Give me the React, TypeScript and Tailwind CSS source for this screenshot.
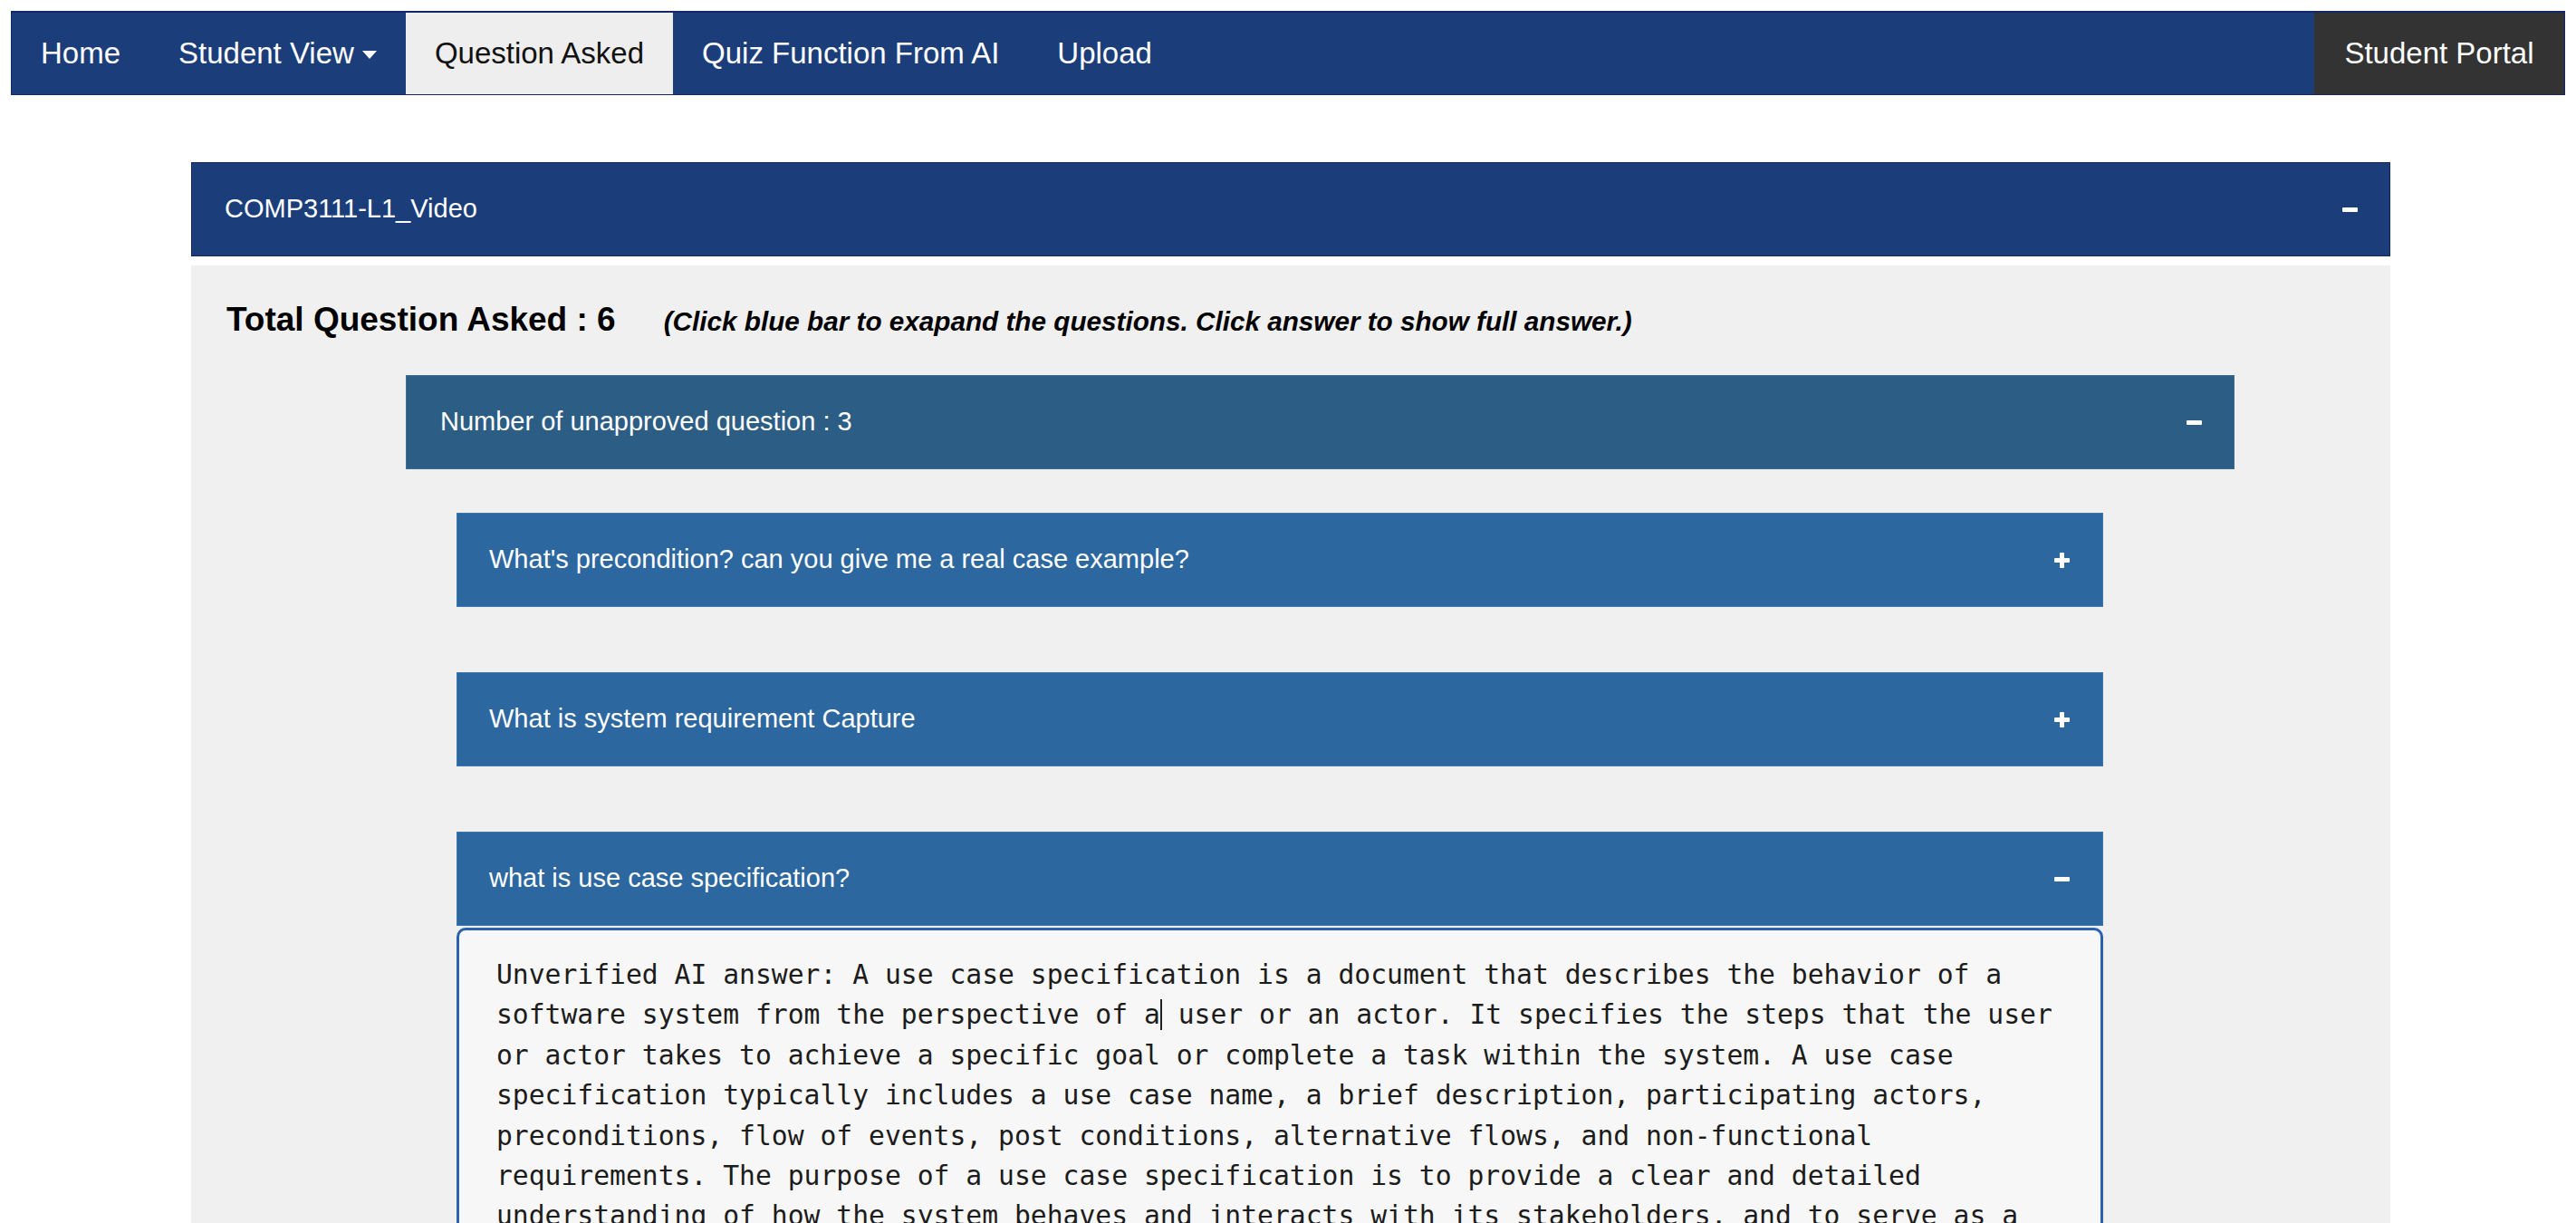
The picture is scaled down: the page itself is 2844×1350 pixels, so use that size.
import React from "react"

const navItems = ["Home", "Student View", "Question Asked", "Quiz Function From AI", "Upload"]

const questions = [
  { text: "What's precondition? can you give me a real case example?", open: false },
  { text: "What is system requirement Capture", open: false },
  { text: "what is use case specification?", open: true },
]

const Minus = () => <span className="block w-[17px] h-[5px] bg-white rounded-[1px]" />

const Plus = () => (
  <span className="relative block w-[17px] h-[17px]">
    <span className="absolute left-0 top-[6px] w-[17px] h-[5px] bg-white rounded-[1px]" />
    <span className="absolute left-[6px] top-0 w-[5px] h-[17px] bg-white rounded-[1px]" />
  </span>
)

const Navbar = () => (
  <header className="mx-[12px] mt-[12px] h-[93px] shrink-0 flex bg-[#1b3e7a] border border-t-2 border-[#14276c] text-[33px]">
    {navItems.map((item) => {
      const active = item === "Question Asked"
      return (
        <div
          key={item}
          className={
            active
              ? "flex items-center px-[32px] bg-[#eeeeee] text-[#111111]"
              : "flex items-center px-[32px] text-white"
          }
        >
          {item}
          {item === "Student View" && (
            <span className="ml-[9px] mt-[2px] w-0 h-0 border-l-[8px] border-r-[8px] border-t-[9px] border-l-transparent border-r-transparent border-t-white" />
          )}
        </div>
      )
    })}
    <div className="ml-auto flex items-center justify-center w-[276px] bg-[#333333] text-white">
      Student Portal
    </div>
  </header>
)

const AnswerBox = () => (
  <div className="mt-[2px] w-[1818px] flex-1 bg-[#f7f7f7] border-[3px] border-b-0 border-[#2a62b0] rounded-t-[10px] pl-[41px] pr-[31px] pt-[27px] overflow-hidden">
    <p
      className="text-[29.7px] leading-[44.4px] text-[#1c1c1c]"
      style={{ fontFamily: '"DejaVu Sans Mono", "Liberation Mono", monospace' }}
    >
      Unverified AI answer: A use case specification is a document that describes the behavior of a
      software system from the perspective of a
      <span className="inline-block w-0 h-[34px] align-[-7px] border-l-2 border-[#222222]" /> user or an
      actor. It specifies the steps that the user or actor takes to achieve a specific goal or complete a
      task within the system. A use case specification typically includes a use case name, a brief
      description, participating actors, preconditions, flow of events, post conditions, alternative
      flows, and non-functional requirements. The purpose of a use case specification is to provide a
      clear and detailed understanding of how the system behaves and interacts with its stakeholders, and
      to serve as a reference for the development and testing of the system.
    </p>
  </div>
)

export default function App() {
  return (
    <div
      className="w-[2844px] h-[1350px] overflow-hidden bg-white flex flex-col"
      style={{ fontFamily: '"Liberation Sans", Arial, sans-serif' }}
    >
      <Navbar />

      <div className="ml-[211px] mt-[74px] w-[2428px] flex-1 flex flex-col">
        {/* video header */}
        <div className="h-[104px] shrink-0 flex items-center justify-between bg-[#1b3e7a] border border-[#0f2966] pl-[36px] pr-[35px] text-white text-[29px]">
          <span>COMP3111-L1_Video</span>
          <Minus />
        </div>

        <div className="mt-[10px] flex-1 bg-[#f0f0f0] flex flex-col">
          <div className="flex items-baseline pl-[39px] pt-[32px] h-[121px] shrink-0">
            <span className="font-bold text-[37px] text-black">Total Question Asked : 6</span>
            <span className="ml-[53px] font-bold italic text-[29.7px] text-black">
              (Click blue bar to exapand the questions. Click answer to show full answer.)
            </span>
          </div>

          <div className="ml-[237px] w-[2019px] h-[104px] shrink-0 flex items-center justify-between bg-[#2c5d85] border border-[#3f6f96] pl-[37px] pr-[35px] text-white text-[29px]">
            <span>Number of unapproved question : 3</span>
            <Minus />
          </div>

          <div className="ml-[293px] flex-1 flex flex-col">
            {questions.map((q, i) => (
              <div
                key={q.text}
                className={
                  i === 0
                    ? "mt-[48px] w-[1818px] h-[104px] shrink-0 flex items-center justify-between bg-[#2c67a0] border border-[#3e78ae] pl-[35px] pr-[36px] text-white text-[29px]"
                    : "mt-[72px] w-[1818px] h-[104px] shrink-0 flex items-center justify-between bg-[#2c67a0] border border-[#3e78ae] pl-[35px] pr-[36px] text-white text-[29px]"
                }
              >
                <span>{q.text}</span>
                {q.open ? <Minus /> : <Plus />}
              </div>
            ))}
            <AnswerBox />
          </div>
        </div>
      </div>
    </div>
  )
}
